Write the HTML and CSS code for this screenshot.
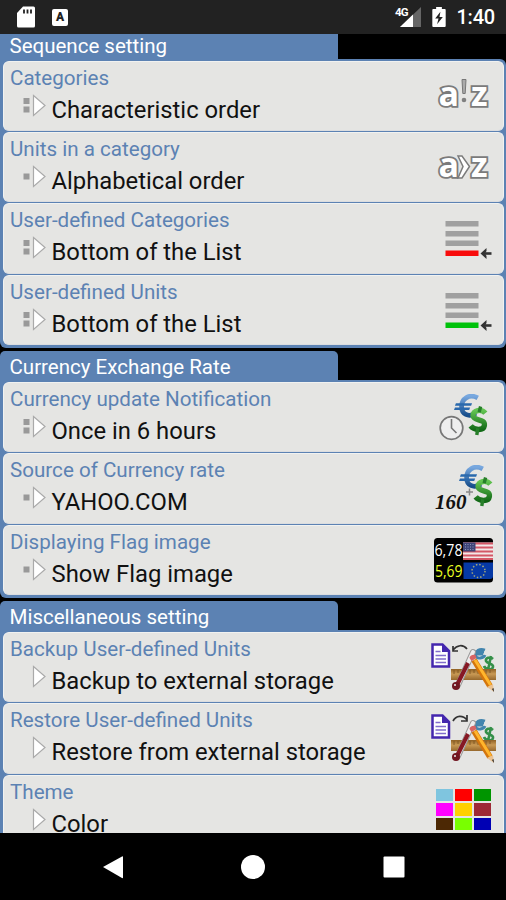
FILE: index.html
```
<!DOCTYPE html>
<html lang="en">
<head>
<meta charset="utf-8">
<title>Settings</title>
<link rel="stylesheet" href="styles.css">
</head>
<body>
<svg class="defs" width="0" height="0">
  <defs>
    <linearGradient id="blue" x1="0" y1="0" x2="0" y2="1"><stop offset="0" stop-color="#78a8df"/><stop offset="1" stop-color="#174e8c"/></linearGradient>
    <linearGradient id="green" x1="0" y1="0" x2="0" y2="1"><stop offset="0" stop-color="#63c452"/><stop offset="1" stop-color="#146b18"/></linearGradient>
    <linearGradient id="wood" x1="0" y1="0" x2="0" y2="1"><stop offset="0" stop-color="#8f6023"/><stop offset=".45" stop-color="#c99a55"/><stop offset="1" stop-color="#96682d"/></linearGradient>
    <symbol id="play" viewBox="0 0 24 24"><path d="M10.5 2.5L22 12.5L10.5 22.5Z" fill="#fff" stroke="#aaa" stroke-width="1.2"/></symbol>
    <symbol id="one" viewBox="0 0 24 24"><path d="M0.5 9.5h6v6h-6z" fill="#999"/><use href="#play"/></symbol>
    <symbol id="two" viewBox="0 0 24 24"><path d="M0.5 5h6v6h-6zM0.5 13.5h6v6h-6z" fill="#999"/><use href="#play"/></symbol>
    <symbol id="list" viewBox="0 0 80 70"><path d="M21.500 18h33v5.500h-33zM21.500 28h33v5.500h-33zM21.500 37.500h33v5.500h-33z" fill="#a0a0a0"/><path d="M21.500 47.500h33v5.500h-33z" fill="currentColor"/><path d="M67.500 50.500H58" stroke="#333" stroke-width="2.600"/><path d="M56.500 50.500L62.500 45v3l-1.500 2.500l1.500 2.500v3z" fill="#333"/></symbol>
    <symbol id="money" viewBox="0 0 40 46">
      <path d="M25 4C16 -1 8 5 8 13S15 25 23 20" fill="none" stroke="url(#blue)" stroke-width="5"/>
      <path d="M2 9.500h17l-1 2.800H1zM1 14h16l-1 2.800H0z" fill="#2a69ad"/>
      <path d="M33 20C29 15 19.500 17 20 22.500C20.500 29 33 25 32 33C31 39 21 38 17.500 33.500" fill="none" stroke="url(#green)" stroke-width="5.600"/><path d="M28 13l-1.500 6M25 36l-1 7" stroke="#277f2a" stroke-width="3.600"/>
    </symbol>
    <symbol id="tools" viewBox="0 0 80 70">
      <path d="M8.500 12.500h10l6.500 6.500v15.500h-16.500z" fill="#fff" stroke="#4427ae" stroke-width="2.500"/><path d="M18 12v8h7z" fill="#4427ae"/><path d="M11.500 19.500h5M11.500 23.500h10.500M11.500 27h10.500M11.500 30.500h10.500" stroke="#806dcc" stroke-width="1.600"/>
      <path d="M61 18C55 16 52 19 51 23C53 28 60 26 61 23M48 22h11M49 20h11" fill="none" stroke="#4285ae" stroke-width="2.800"/>
      <path d="M69 27C66 24 61 26 62 29S70 31 69 35S61 37 60 34M67 24l-3 14" fill="none" stroke="#359049" stroke-width="2.600"/>
      <path d="M27 37h45v11H27z" fill="url(#wood)"/><path d="M30 38v4m4-4v3m4-3v4m4-4v3m4-3v4m4-4v3m4-3v4m4-4v3m4-3v4m4-4v3" stroke="#765022" stroke-width=".8"/>
      <path d="M49 20L34 53" stroke="#999" stroke-width="6" stroke-linecap="round"/><path d="M49 20L34 53" stroke="#eee" stroke-width="4" stroke-linecap="round"/><path d="M44 31L33 53" stroke="#861824" stroke-width="4"/><circle cx="32" cy="54" r="4" fill="#711620"/><circle cx="31" cy="53" r="1" fill="#eee"/>
      <path d="M50 28L66 54" stroke="#d4750c" stroke-width="6"/><path d="M51 28L66.500 53" stroke="#ffb62d" stroke-width="3"/><path d="M47.500 29l5-3-1-3c-3-1-6 1-6 3z" fill="#d86464"/><path d="M63 55l6-3 1 8z" fill="#eac394"/><path d="M68 57l2 3-.5-4z" fill="#222"/>
    </symbol>
  </defs>
</svg>
<div class="screen">
  <header class="status">
    <svg class="sd" viewBox="0 0 18 22"><path d="M6 .5h10.500q1.500 0 1.500 1.500v18q0 1.500-1.500 1.500H1.500Q0 21.500 0 20V7z" fill="#fff"/><path d="M7 3.500v4M10.500 3.500v4M14 3.500v4" stroke="#222" stroke-width="1.800"/></svg>
    <span class="badge">A</span>
    <svg class="signal" viewBox="0 0 28 24"><path d="M26 4v20H5z" fill="#666"/><path d="M18 11.500V24H5z" fill="#fff"/><text x="0" y="13">4G</text></svg>
    <svg class="battery" viewBox="0 0 14 22"><path d="M4 0h6v2h3q1 0 1 1v17q0 1-1 1H1q-1 0-1-1V3q0-1 1-1h3z" fill="#fff"/><path d="M8.500 5L3 12h3.500L5 18l6-7.500H7.500z" fill="#222"/></svg>
    <span class="clock">1:40</span>
  </header>
  <main class="content">
    <section class="group first">
      <h2>Sequence setting</h2>
      <div class="panel">
        <article class="card"><div class="info"><h3>Categories</h3><p><svg class="marker"><use href="#two"/></svg><span>Characteristic order</span></p></div>
          <svg class="icon az" viewBox="0 0 80 70"><text x="14.500" y="45">a</text><text x="47" y="45">z</text><path d="M38 18.500h4l-.8 14h-2.400z" fill="#aaa" stroke="#777"/><circle cx="40" cy="39" r="2.300" fill="#808080"/></svg></article>
        <article class="card"><div class="info"><h3>Units in a category</h3><p><svg class="marker"><use href="#one"/></svg><span>Alphabetical order</span></p></div>
          <svg class="icon az" viewBox="0 0 80 70"><text x="14.500" y="45">a</text><text x="47" y="45">z</text><path d="M34 24h4l7.500 10.500L38 46h-4l5-11.500z" fill="#fff" stroke="#7b7b7b" stroke-width="1.500"/></svg></article>
        <article class="card"><div class="info"><h3>User-defined Categories</h3><p><svg class="marker"><use href="#two"/></svg><span>Bottom of the List</span></p></div><svg class="icon red"><use href="#list"/></svg></article>
        <article class="card"><div class="info"><h3>User-defined Units</h3><p><svg class="marker"><use href="#two"/></svg><span>Bottom of the List</span></p></div><svg class="icon green"><use href="#list"/></svg></article>
      </div>
    </section>
    <section class="group">
      <h2>Currency Exchange Rate</h2>
      <div class="panel">
        <article class="card"><div class="info"><h3>Currency update Notification</h3><p><svg class="marker"><use href="#two"/></svg><span>Once in 6 hours</span></p></div>
          <svg class="icon" viewBox="0 0 80 70"><use href="#money" x="30" y="12" width="38" height="44"/><circle cx="27.500" cy="46" r="11.300" fill="#eee" stroke="#777" stroke-width="1.700"/><path d="M27.500 37v9l5 5" fill="none" stroke="#777" stroke-width="1.600"/></svg></article>
        <article class="card"><div class="info"><h3>Source of Currency rate</h3><p><svg class="marker"><use href="#one"/></svg><span>YAHOO.COM</span></p></div>
          <svg class="icon" viewBox="0 0 80 70"><use href="#money" x="35" y="12" width="38" height="44"/><text class="sum" x="11" y="56">160</text><path d="M42 39h7M45.500 35.500v7" stroke="#888" stroke-width="1.500"/></svg></article>
        <article class="card"><div class="info"><h3>Displaying Flag image</h3><p><svg class="marker"><use href="#one"/></svg><span>Show Flag image</span></p></div>
          <svg class="icon" viewBox="0 0 80 70"><rect x="10" y="13" width="59" height="44.500" rx="3.500"/><path d="M39 17.500h30v17H39z" fill="#f3e8e8"/><path d="M39 18.500h30M39 22.500h30M39 26.500h30M39 30.500h30M39 34h30" stroke="#d45766" stroke-width="1.800"/><path d="M39 17.500h12.500v9H39z" fill="#3f4578"/><path d="M41 19.500h9M41 22h9M41 24.500h9" stroke="#a6a9c8" stroke-width=".8" stroke-dasharray="1 1.500"/><path d="M39.500 37.500H69V51q0 3-3 3H39.500z" fill="#0639a5"/><circle cx="54.500" cy="46" r="6.500" fill="none" stroke="#a5a878" stroke-width="1.500" stroke-dasharray="1.500 1.900"/><text class="rate" x="10.500" y="31" textLength="28" lengthAdjust="spacingAndGlyphs">6,78</text><text class="rate yellow" x="11" y="51.500" textLength="27.500" lengthAdjust="spacingAndGlyphs">5,69</text></svg></article>
      </div>
    </section>
    <section class="group">
      <h2>Miscellaneous setting</h2>
      <div class="panel">
        <article class="card"><div class="info"><h3>Backup User-defined Units</h3><p><svg class="marker"><use href="#play"/></svg><span>Backup to external storage</span></p></div>
          <svg class="icon" viewBox="0 0 80 70"><use href="#tools"/><path d="M43 17C39 12 33 13 29 18M34 19h-5v-5" fill="none" stroke="#333" stroke-width="1.700"/></svg></article>
        <article class="card"><div class="info"><h3>Restore User-defined Units</h3><p><svg class="marker"><use href="#play"/></svg><span>Restore from external storage</span></p></div>
          <svg class="icon" viewBox="0 0 80 70"><use href="#tools"/><path d="M29 18C32 12 39 12 43 17M43 12v6h-6" fill="none" stroke="#333" stroke-width="1.700"/></svg></article>
        <article class="card"><div class="info"><h3>Theme</h3><p><svg class="marker"><use href="#play"/></svg><span>Color</span></p></div>
          <div class="palette"><i class="sky"></i><i class="scarlet"></i><i class="forest"></i><i class="magenta"></i><i class="gold"></i><i class="brick"></i><i class="brown"></i><i class="lime"></i><i class="navy"></i></div></article>
      </div>
    </section>
  </main>
  <nav class="nav">
    <svg viewBox="0 0 24 24"><path d="M2 12L21 1.500Q22 1 22 2v20.500q0 1-1 .5z"/></svg>
    <svg viewBox="0 0 24 24"><circle cx="12" cy="12" r="12"/></svg>
    <svg viewBox="0 0 24 24"><rect x="1.500" y="1.500" width="21" height="21" rx="1"/></svg>
  </nav>
</div>
</body>
</html>
```

FILE: styles.css
```
* { box-sizing: border-box; }
body { margin: 0; background: #000; font-family: Roboto, "Liberation Sans", sans-serif; }
.defs { display: block; width: 0; height: 0; }
.screen { display: flex; flex-direction: column; width: 506px; height: 900px; overflow: hidden; }
.status { flex: none; height: 34px; background: #222; color: #fff; display: flex; align-items: center; padding: 0 11px 0 17px; }
.sd { width: 18px; height: 22px; }
.badge { width: 16px; height: 17px; margin-left: 17px; background: #fff; color: #222; border-radius: 2px; font-size: 12px; line-height: 17px; font-weight: 900; text-align: center; }
.signal { width: 28px; height: 24px; margin: -4px 0 0 auto; overflow: visible; }
.signal text { font-size: 11.500px; font-weight: 700; fill: #fff; stroke: #222; stroke-width: 2px; paint-order: stroke; letter-spacing: -.8px; }
.battery { width: 14px; height: 21px; margin-left: 9px; }
.clock { margin-left: 10px; font-size: 20px; line-height: 36px; font-weight: 500; letter-spacing: -.2px; }
.content { height: 799px; flex: none; overflow: hidden; }
.group { margin-bottom: 3.400px; }
.group h2 { width: 338px; height: 29px; margin: 0; padding-left: 9.500px; background: #5c82b3; color: #fff; border-radius: 5px 5px 0 0; font-size: 20.500px; line-height: 32px; font-weight: 400; white-space: nowrap; }
.group.first h2 { height: 24.500px; line-height: 24px; border-radius: 0; }
.panel { background: #5c82b3; border-radius: 0 6px 6px 6px; padding: 2px 2px 2.500px 3px; display: grid; gap: 1px; }
.card { height: 70.400px; display: flex; justify-content: space-between; background: #e5e5e3; border-radius: 6px; border: 1px solid #f1f2f1; border-bottom-color: #dbdde0; }
.info { padding: 3px 0 0 6px; }
.info h3 { margin: 0; font-size: 20.600px; line-height: 27px; font-weight: 400; color: #5c82b3; white-space: nowrap; }
.info p { margin: 0 0 0 13px; height: 34px; display: flex; font-size: 23.800px; line-height: 36px; color: #111; white-space: nowrap; }
.marker { width: 24px; height: 24px; margin: 1px 4.500px 0 0; }
.icon { width: 80px; height: 70px; flex: none; margin: -1px -1px 0 0; }
.az text { font-family: "Open Sans", sans-serif; font-size: 34px; font-weight: 700; fill: #fff; stroke: #7b7b7b; stroke-width: 3.600px; paint-order: stroke; }
.red { color: #f80c0c; }
.green { color: #00c20b; }
.sum { font: italic 700 21px "Liberation Serif", serif; fill: #111; }
.rate { font: 500 17px "Open Sans", sans-serif; fill: #fff; }
.rate.yellow { fill: #eaff22; }
.palette { display: grid; grid-template-columns: repeat(3, 17px); grid-template-rows: repeat(3, 12.500px); gap: 2px; margin: 13px 12px 0 0; }
.sky { background: #7fc5df; } .scarlet { background: #f00; } .forest { background: #009500; }
.magenta { background: #f0f; } .gold { background: #ffd000; } .brick { background: #9e2935; }
.brown { background: #4c2804; } .lime { background: #79ff00; } .navy { background: #0000b4; }
.nav { height: 67px; display: grid; grid-template-columns: repeat(3, 140.500px); justify-content: center; justify-items: center; align-items: center; }
.nav svg { width: 24px; height: 24px; fill: #fff; }
```
